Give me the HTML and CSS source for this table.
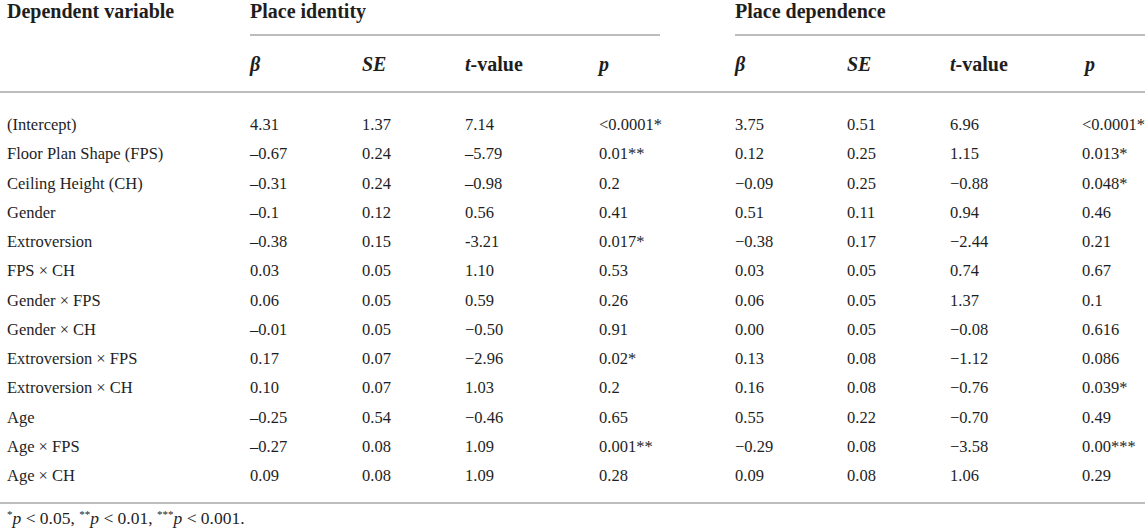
FILE: index.html
```html
<!DOCTYPE html>
<html lang="en">
<head>
<meta charset="utf-8">
<title>Regression results</title>
<link rel="stylesheet" href="styles.css">
</head>
<body>
<table class="reg">
  <colgroup>
    <col class="c-var">
    <col class="c-b">
    <col class="c-se">
    <col class="c-t">
    <col class="c-p1">
    <col class="c-b">
    <col class="c-se">
    <col class="c-t2">
    <col class="c-p2">
  </colgroup>
  <thead>
    <tr class="h-top">
      <th rowspan="2" class="dv">Dependent variable</th>
      <th colspan="4" class="grp"><div class="grp-label">Place identity</div></th>
      <th colspan="4" class="grp"><div class="grp-label grp-last">Place dependence</div></th>
    </tr>
    <tr class="h-sub">
      <th><i>β</i></th><th><i>SE</i></th><th><i>t</i>-value</th><th><i>p</i></th>
      <th><i>β</i></th><th><i>SE</i></th><th><i>t</i>-value</th><th class="last-h"><i>p</i></th>
    </tr>
  </thead>
  <tbody>
    <tr><td>(Intercept)</td><td>4.31</td><td>1.37</td><td>7.14</td><td>&lt;0.0001*</td><td>3.75</td><td>0.51</td><td>6.96</td><td>&lt;0.0001*</td></tr>
    <tr><td>Floor Plan Shape (FPS)</td><td>–0.67</td><td>0.24</td><td>–5.79</td><td>0.01**</td><td>0.12</td><td>0.25</td><td>1.15</td><td>0.013*</td></tr>
    <tr><td>Ceiling Height (CH)</td><td>–0.31</td><td>0.24</td><td>–0.98</td><td>0.2</td><td>−0.09</td><td>0.25</td><td>−0.88</td><td>0.048*</td></tr>
    <tr><td>Gender</td><td>–0.1</td><td>0.12</td><td>0.56</td><td>0.41</td><td>0.51</td><td>0.11</td><td>0.94</td><td>0.46</td></tr>
    <tr><td>Extroversion</td><td>–0.38</td><td>0.15</td><td>-3.21</td><td>0.017*</td><td>−0.38</td><td>0.17</td><td>−2.44</td><td>0.21</td></tr>
    <tr><td>FPS × CH</td><td>0.03</td><td>0.05</td><td>1.10</td><td>0.53</td><td>0.03</td><td>0.05</td><td>0.74</td><td>0.67</td></tr>
    <tr><td>Gender × FPS</td><td>0.06</td><td>0.05</td><td>0.59</td><td>0.26</td><td>0.06</td><td>0.05</td><td>1.37</td><td>0.1</td></tr>
    <tr><td>Gender × CH</td><td>–0.01</td><td>0.05</td><td>−0.50</td><td>0.91</td><td>0.00</td><td>0.05</td><td>−0.08</td><td>0.616</td></tr>
    <tr><td>Extroversion × FPS</td><td>0.17</td><td>0.07</td><td>−2.96</td><td>0.02*</td><td>0.13</td><td>0.08</td><td>−1.12</td><td>0.086</td></tr>
    <tr><td>Extroversion × CH</td><td>0.10</td><td>0.07</td><td>1.03</td><td>0.2</td><td>0.16</td><td>0.08</td><td>−0.76</td><td>0.039*</td></tr>
    <tr><td>Age</td><td>–0.25</td><td>0.54</td><td>−0.46</td><td>0.65</td><td>0.55</td><td>0.22</td><td>−0.70</td><td>0.49</td></tr>
    <tr><td>Age × FPS</td><td>–0.27</td><td>0.08</td><td>1.09</td><td>0.001**</td><td>−0.29</td><td>0.08</td><td>−3.58</td><td>0.00***</td></tr>
    <tr><td>Age × CH</td><td>0.09</td><td>0.08</td><td>1.09</td><td>0.28</td><td>0.09</td><td>0.08</td><td>1.06</td><td>0.29</td></tr>
  </tbody>
</table>
<p class="note"><sup>*</sup><i>p</i> &lt; 0.05, <sup>**</sup><i>p</i> &lt; 0.01, <sup>***</sup><i>p</i> &lt; 0.001.</p>
</body>
</html>
```
FILE: styles.css
```css
html, body {
  margin: 0;
  padding: 0;
  background: #ffffff;
}

body {
  font-family: "Liberation Serif", "Times New Roman", serif;
  color: #1e1e1e;
  width: 1145px;
  overflow: hidden;
}

.reg {
  width: 1145px;
  table-layout: fixed;
  border-collapse: collapse;
  border-spacing: 0;
}

.c-var { width: 243px; }
.c-b { width: 112px; }
.c-se { width: 103px; }
.c-t { width: 134px; }
.c-p1 { width: 136px; }
.c-t2 { width: 132px; }
.c-p2 { width: 70px; }

.reg th,
.reg td {
  padding: 0 0 0 7px;
  text-align: left;
  white-space: nowrap;
  overflow: visible;
}

.reg th {
  font-size: 20px;
  font-weight: bold;
  line-height: 20px;
}

.h-top th {
  vertical-align: top;
  padding-top: 1px;
}

.dv {
  border-bottom: 2px solid #bdbdbd;
}

.grp-label {
  width: 410px;
  height: 35px;
  border-bottom: 2px solid #bdbdbd;
  box-sizing: border-box;
}

.grp-last {
  width: auto;
}

.h-sub th {
  height: 55px;
  vertical-align: middle;
  border-bottom: 2px solid #bdbdbd;
}

.h-sub .last-h {
  padding-left: 10px;
}

.reg td {
  font-size: 16.5px;
  line-height: 19.25px;
  padding-top: 5px;
  padding-bottom: 5px;
}

.reg tbody tr:first-child td {
  padding-top: 22px;
}

.reg tbody tr:last-child td {
  padding-bottom: 17px;
  border-bottom: 2px solid #bdbdbd;
}

.note {
  margin: 4px 0 0;
  padding-left: 7px;
  font-size: 17.5px;
  line-height: 20px;
}

.note sup {
  font-size: 11px;
  line-height: 0;
  vertical-align: 6px;
}
```
